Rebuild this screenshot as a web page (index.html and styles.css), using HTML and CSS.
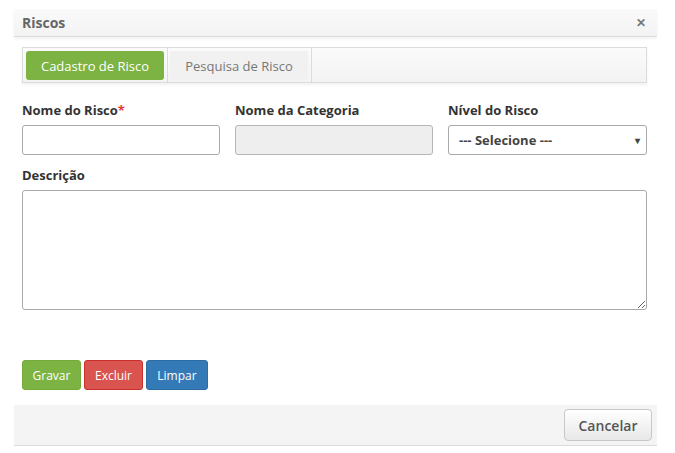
FILE: index.html
```html
<!DOCTYPE html>
<html>
<head>
<meta charset="utf-8">
<link rel="stylesheet" href="styles.css">
</head>
<body>
<div class="modal">
  <div class="modal-header">
    <span class="title">Riscos</span>
    <span class="close">&#x2715;</span>
  </div>
  <div class="modal-body">
    <div class="tabs">
      <div class="tab active">Cadastro de Risco</div>
      <div class="tab">Pesquisa de Risco</div>
    </div>
    <div class="row">
      <div class="field">
        <label>Nome do Risco<span class="req">*</span></label>
        <input class="input" type="text">
      </div>
      <div class="field">
        <label>Nome da Categoria</label>
        <input class="input disabled" type="text" disabled>
      </div>
      <div class="field">
        <label>Nível do Risco</label>
        <div class="select">
          <span>--- Selecione ---</span>
          <span class="caret">&#9662;</span>
        </div>
      </div>
    </div>
    <div class="field full">
      <label>Descrição</label>
      <textarea class="textarea"></textarea>
    </div>
    <div class="actions">
      <button class="btn green">Gravar</button>
      <button class="btn red">Excluir</button>
      <button class="btn blue">Limpar</button>
    </div>
  </div>
  <div class="modal-footer">
    <button class="cancel">Cancelar</button>
  </div>
</div>
</body>
</html>
```
FILE: styles.css
```css
html, body {
  margin: 0;
  padding: 0;
  background: #fff;
  font-family: "Open Sans", "Liberation Sans", sans-serif;
}
.modal {
  margin: 9px 0 0 14px;
  width: 643px;
}
.modal-header {
  height: 27px;
  background: linear-gradient(#fafafa, #f3f3f3);
  border-bottom: 1px solid #dcdcdc;
  box-shadow: 0 2px 3px rgba(0,0,0,0.05);
  display: flex;
  align-items: center;
  justify-content: space-between;
  padding: 0 11px 0 8px;
}
.title {
  font-weight: 700;
  font-size: 14px;
  color: #666;
}
.close {
  font-size: 12px;
  font-weight: 700;
  color: #777;
}
.modal-body {
  padding: 10px 10px 15px 8px;
}
.tabs {
  display: flex;
  height: 34px;
  border: 1px solid #dcdcdc;
  background: linear-gradient(#fbfbfb, #f3f3f3);
  box-shadow: 0 2px 3px rgba(0,0,0,0.06);
  align-items: stretch;
}
.tab {
  width: 138px;
  margin: 3px 0 2px 3px;
  font-size: 13px;
  color: #777;
  display: flex;
  align-items: center;
  justify-content: center;
  background: #f1f1f1;
  position: relative;
}
.tab.active {
  background: #7cb342;
  color: #fff;
  border-radius: 3px;
}
.tab:first-child {
  margin-right: 3px;
}
.tab:first-child::after,
.tab:last-child::after {
  content: "";
  position: absolute;
  top: -3px;
  bottom: -2px;
  right: -4px;
  width: 1px;
  background: #dcdcdc;
}
.tab:last-child {
  margin-left: 3px;
}
.row {
  display: flex;
  gap: 15px;
  margin-top: 18px;
}
.row .field {
  width: 198px;
}
.row .field:last-child {
  width: 199px;
}
.field label {
  display: block;
  font-weight: 700;
  font-size: 13px;
  color: #333;
  line-height: 18px;
  margin-bottom: 6px;
}
.req {
  color: #e53935;
}
.input {
  box-sizing: border-box;
  width: 100%;
  height: 30px;
  border: 1px solid #a9a9a9;
  border-radius: 3px;
  margin: 0;
  display: block;
  background: #fff;
}
.input.disabled {
  background: #eee;
  border-color: #b5b5b5;
}
.select {
  box-sizing: border-box;
  height: 30px;
  border: 1px solid #a9a9a9;
  border-radius: 3px;
  display: flex;
  align-items: center;
  justify-content: space-between;
  padding: 0 6px 0 10px;
  font-size: 13px;
  font-weight: 700;
  color: #444;
}
.caret {
  font-size: 10px;
  color: #444;
}
.full {
  margin-top: 11px;
}
.textarea {
  box-sizing: border-box;
  display: block;
  width: 625px;
  height: 120px;
  border: 1px solid #a9a9a9;
  border-radius: 3px;
  margin: 0;
  resize: both;
}
.actions {
  display: flex;
  gap: 3px;
  margin-top: 50px;
}
.btn {
  height: 30px;
  border: 1px solid transparent;
  border-radius: 3px;
  color: #fff;
  font-family: "Open Sans", "Liberation Sans", sans-serif;
  font-size: 12px;
  padding: 0;
}
.btn.green { background: #7cb342; border-color: #74ab3b; width: 59px; }
.btn.red { background: #d9534f; border-color: #c9302c; width: 59px; }
.btn.blue { background: #337ab7; border-color: #2e6da4; width: 62px; }
.modal-footer {
  height: 40px;
  background: #f4f4f4;
  border-bottom: 1px solid #dcdcdc;
  display: flex;
  align-items: center;
  justify-content: flex-end;
  padding-right: 5px;
}
.cancel {
  width: 88px;
  height: 32px;
  border: 1px solid #c8c8c8;
  border-radius: 4px;
  background: linear-gradient(#fff, #e8e8e8);
  font-family: "Open Sans", "Liberation Sans", sans-serif;
  font-weight: 600;
  font-size: 14px;
  color: #555;
  padding: 0;
}
```
